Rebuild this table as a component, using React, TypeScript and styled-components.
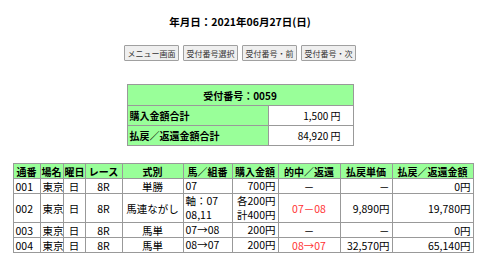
import styled, { createGlobalStyle } from "styled-components";

const GlobalStyle = createGlobalStyle`
html, body {
    margin: 0;
    padding: 0;
    background: #ffffff;
}
body {
    font-family: "Noto Sans CJK JP", "Liberation Sans", sans-serif;
    color: #000000;
}
`

const summary = {
    receiptNo: `0059`,
    purchase: `1,500 円`,
    payout: `84,920 円`,
}

type Align = "left" | "center" | "right";

interface Row {
    no: string;
    place: string;
    day: string;
    race: string;
    type: string;
    horses: string[];
    amount: string[];
    hit: string;
    hitRed?: boolean;
    unit: string;
    total: string;
}

const columns: { label: string; width: number }[] = [
    { label: `通番`, width: 27 },
    { label: `場名`, width: 23 },
    { label: `曜日`, width: 22 },
    { label: `レース`, width: 37 },
    { label: `式別`, width: 61 },
    { label: `馬／組番`, width: 49 },
    { label: `購入金額`, width: 46 },
    { label: `的中／返還`, width: 62 },
    { label: `払戻単価`, width: 52 },
    { label: `払戻／返還金額`, width: 81 },
];

const rows: Row[] = [
    { no: `001`, place: `東京`, day: `日`, race: `8R`, type: `単勝`, horses: [`07`], amount: [`700円`], hit: `－`, unit: `－`, total: `0円` },
    { no: `002`, place: `東京`, day: `日`, race: `8R`, type: `馬連ながし`, horses: [`軸：07`, `08,11`], amount: [`各200円`, `計400円`], hit: `07－08`, hitRed: true, unit: `9,890円`, total: `19,780円` },
    { no: `003`, place: `東京`, day: `日`, race: `8R`, type: `馬単`, horses: [`07→08`], amount: [`200円`], hit: `－`, unit: `－`, total: `0円` },
    { no: `004`, place: `東京`, day: `日`, race: `8R`, type: `馬単`, horses: [`08→07`], amount: [`200円`], hit: `08→07`, hitRed: true, unit: `32,570円`, total: `65,140円` },
];

const buttons = [`メニュー画面`, `受付番号選択`, `受付番号・前`, `受付番号・次`];

const App = () =>
    <>
        <GlobalStyle />
        <Page>
            <Title>年月日：2021年06月27日(日)</Title>
            <ButtonBar>
                {buttons.map(b => <NavButton key={b}>{b}</NavButton>)}
            </ButtonBar>
            <SummaryTable>
                <tbody>
                    <tr>
                        <SummaryHead colSpan={2}>受付番号：{summary.receiptNo}</SummaryHead>
                    </tr>
                    <tr>
                        <SummaryLabel>購入金額合計</SummaryLabel>
                        <SummaryValue>{summary.purchase}</SummaryValue>
                    </tr>
                    <tr>
                        <SummaryLabel>払戻／返還金額合計</SummaryLabel>
                        <SummaryValue>{summary.payout}</SummaryValue>
                    </tr>
                </tbody>
            </SummaryTable>
            <DetailTable>
                <colgroup>
                    {columns.map(c => <col key={c.label} style={{ width: c.width }} />)}
                </colgroup>
                <thead>
                    <tr>
                        {columns.map(c => <HeadCell key={c.label}>{c.label}</HeadCell>)}
                    </tr>
                </thead>
                <tbody>
                    {rows.map(r =>
                        <tr key={r.no}>
                            <Cell align="left">{r.no}</Cell>
                            <Cell align="left">{r.place}</Cell>
                            <Cell align="center">{r.day}</Cell>
                            <Cell align="center">{r.race}</Cell>
                            <Cell align="center">{r.type}</Cell>
                            <Cell align="left">{r.horses.map(h => <Line key={h}>{h}</Line>)}</Cell>
                            <Cell align="right">{r.amount.map(a => <Line key={a}>{a}</Line>)}</Cell>
                            <Cell align="center" red={r.hitRed}>{r.hit}</Cell>
                            <Cell align="right">{r.unit}</Cell>
                            <Cell align="right">{r.total}</Cell>
                        </tr>
                    )}
                </tbody>
            </DetailTable>
        </Page>
    </>

export default App;

const Page = styled.div`
width: 480px;
height: 257px;
overflow: hidden;
display: flex;
flex-direction: column;
align-items: center;
padding-top: 15px;
box-sizing: border-box;
`

const Title = styled.h1`
margin: 0;
font-size: 10.5px;
line-height: 14px;
font-weight: bold;
`

const ButtonBar = styled.div`
display: flex;
gap: 4px;
margin-top: 16px;
`

const NavButton = styled.button`
font-family: inherit;
font-size: 8px;
line-height: 11px;
height: 16px;
width: 55px;
padding: 0;
color: #333333;
background: #efefef;
border: 1px solid #a0a0a0;
border-radius: 1px;
white-space: nowrap;
`

const SummaryTable = styled.table`
margin-top: 23px;
width: 227px;
border-collapse: collapse;
font-size: 10px;
border: 1px solid #808080;
`

const SummaryHead = styled.td`
background: #99ff99;
text-align: center;
font-weight: bold;
height: 20px;
padding: 0 4px;
border: 1px solid #999999;
`

const SummaryLabel = styled.td`
background: #99ff99;
font-weight: bold;
width: 136px;
height: 19px;
padding: 0 2px;
border: 1px solid #999999;
`

const SummaryValue = styled.td`
background: #ffffff;
text-align: right;
height: 19px;
padding: 0 12px 0 4px;
border: 1px solid #999999;
`

const DetailTable = styled.table`
margin-top: 17px;
margin-left: 6px;
width: 461px;
table-layout: fixed;
border-collapse: collapse;
font-size: 10.5px;
line-height: 13px;
border: 1px solid #808080;
`

const HeadCell = styled.th`
background: #99ff99;
font-weight: bold;
font-size: 10px;
text-align: center;
white-space: nowrap;
height: 14px;
padding: 0 1px;
border: 1px solid #999999;
`

const Cell = styled.td<{ align: Align; red?: boolean }>`
text-align: ${p => p.align};
color: ${p => p.red ? "#ff3333" : "#000000"};
white-space: nowrap;
height: 13px;
padding: 0 2px;
background: #ffffff;
border: 1px solid #999999;
`

const Line = styled.div`
line-height: 14px;
`
